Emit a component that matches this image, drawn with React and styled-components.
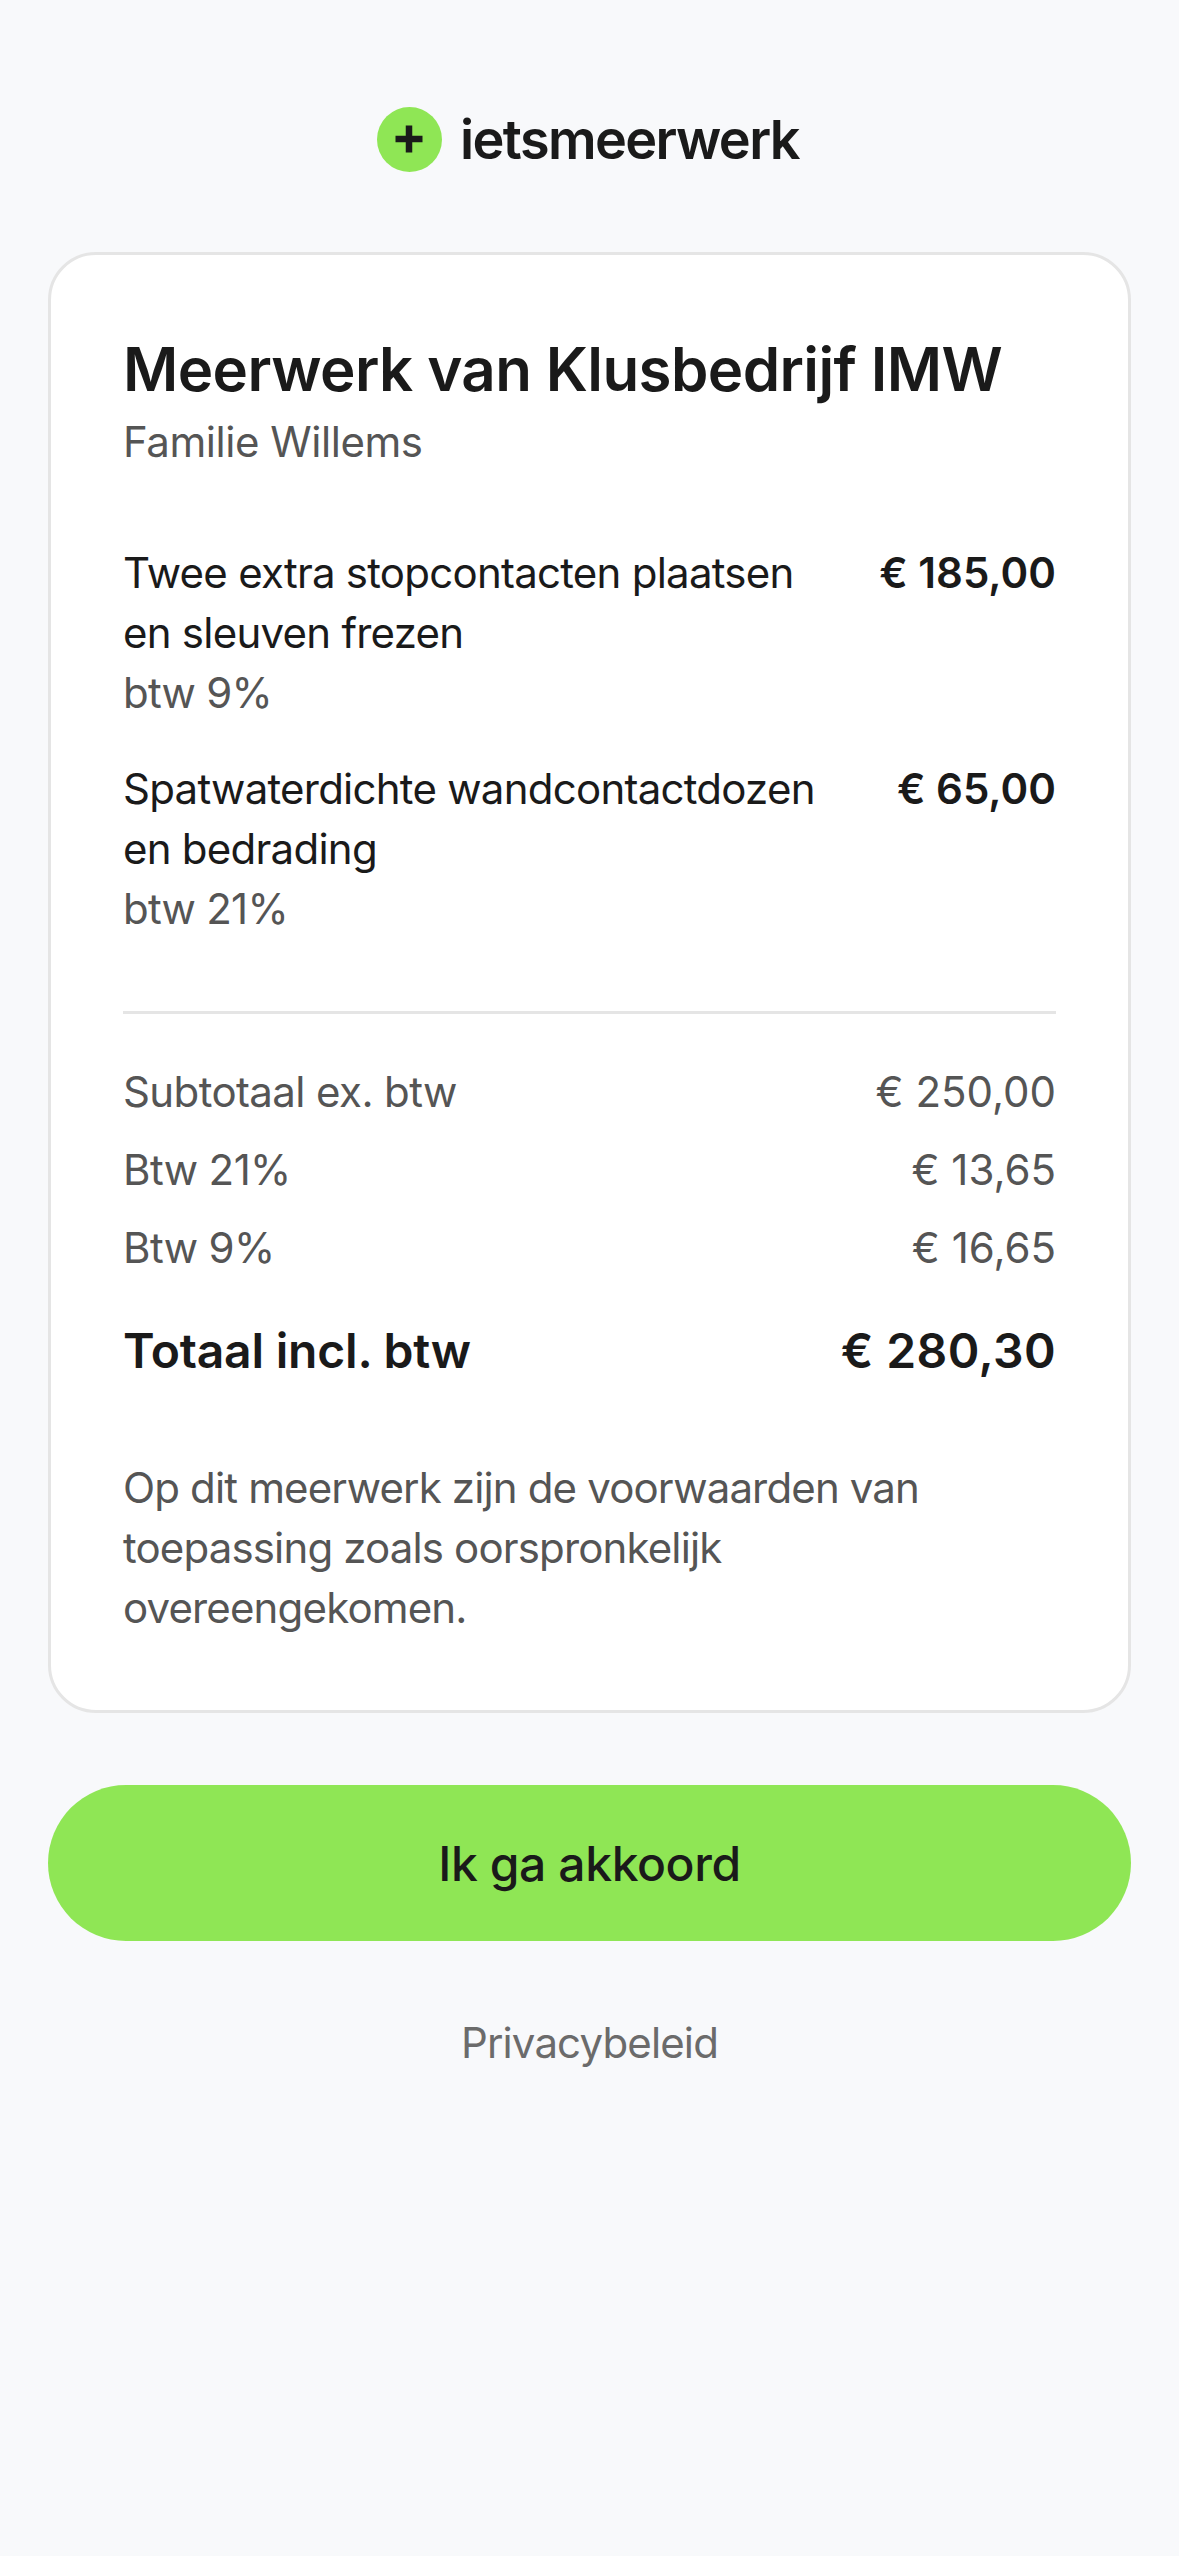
import React from 'react';
import styled, { createGlobalStyle } from 'styled-components';

const GlobalStyle = createGlobalStyle`
  html, body {
    margin: 0;
    padding: 0;
    background: #f8f9fb;
  }
  body {
    font-family: Inter, "Liberation Sans", sans-serif;
    color: #1a1a1a;
  }
`;

const Page = styled.main`
  min-height: 2556px;
  box-sizing: border-box;
  padding: 106px 48px 0;
  display: flex;
  flex-direction: column;
`;

const Brand = styled.header`
  display: flex;
  justify-content: center;
  align-items: center;
  gap: 18px;
  height: 66px;
  margin-bottom: 80px;
  padding-right: 3px;
`;

const BrandMark = styled.svg`
  width: 65px;
  height: 65px;
  display: block;
`;

const BrandName = styled.span`
  font-size: 54px;
  font-weight: 600;
  letter-spacing: -1.6px;
`;

const Card = styled.section`
  background: white;
  border: 3px solid #e5e5e5;
  border-radius: 48px;
  padding: 78px 72px 72px;
`;

const Title = styled.h1`
  margin: 0 0 7px;
  font-size: 60px;
  line-height: 72px;
  font-weight: 600;
  letter-spacing: -0.6px;
`;

const Customer = styled.p`
  margin: 0 0 71px;
  font-size: 42px;
  line-height: 60px;
  color: #555;
  letter-spacing: -0.45px;
`;

const Item = styled.div`
  display: flex;
  justify-content: space-between;
  gap: 48px;
  margin-bottom: 36px;
  font-size: 42px;
  line-height: 60px;
`;

const ItemName = styled.div`
  max-width: 720px;
  letter-spacing: -0.75px;
`;

const ItemVat = styled.div`
  color: #555;
`;

const ItemPrice = styled.div`
  font-weight: 600;
  white-space: nowrap;
`;

const Divider = styled.hr`
  border: 0;
  border-top: 3px solid #e5e5e5;
  margin: 72px 0 48px;
`;

const Row = styled.div`
  display: flex;
  justify-content: space-between;
  font-size: 42px;
  line-height: 60px;
  color: #555;
  margin-bottom: 18px;
`;

const RowLabel = styled.span`
  letter-spacing: -0.6px;
`;

const TotalRow = styled.div`
  display: flex;
  justify-content: space-between;
  font-size: 48px;
  line-height: 66px;
  font-weight: 600;
  margin: 40px 0 74px;
`;

const TotalLabel = styled.span`
  letter-spacing: -0.2px;
`;

const TotalValue = styled.span`
  letter-spacing: 0.4px;
`;

const Note = styled.p`
  margin: 0;
  font-size: 42px;
  line-height: 60px;
  color: #555;
  letter-spacing: -0.85px;
`;

const AgreeButton = styled.button`
  margin-top: 72px;
  height: 156px;
  border: 0;
  border-radius: 78px;
  background: #8fe655;
  color: #1a1a1a;
  font-family: inherit;
  font-size: 48px;
  font-weight: 500;
  letter-spacing: -0.4px;
`;

const PrivacyLink = styled.a`
  margin-top: 72px;
  text-align: center;
  font-size: 42px;
  line-height: 60px;
  color: #6b6b6b;
  letter-spacing: -0.85px;
`;

const items = [
  { name: 'Twee extra stopcontacten plaatsen en sleuven frezen', vat: 'btw 9%', price: '€ 185,00' },
  { name: 'Spatwaterdichte wandcontactdozen en bedrading', vat: 'btw 21%', price: '€ 65,00' },
];

const rows = [
  ['Subtotaal ex. btw', '€ 250,00'],
  ['Btw 21%', '€ 13,65'],
  ['Btw 9%', '€ 16,65'],
];

export default function App() {
  return (
    <>
      <GlobalStyle />
      <Page>
        <Brand>
          <BrandMark viewBox="0 0 65 65" aria-hidden="true">
            <circle cx="32.5" cy="32.5" r="32.5" fill="#8fe655" />
            <path d="M32 18.5v27M18.5 32h27" stroke="#1a1a1a" strokeWidth="6.5" fill="none" />
          </BrandMark>
          <BrandName>ietsmeerwerk</BrandName>
        </Brand>
        <Card>
          <Title>Meerwerk van Klusbedrijf IMW</Title>
          <Customer>Familie Willems</Customer>
          {items.map(item => (
            <Item key={item.name}>
              <ItemName>
                {item.name}
                <ItemVat>{item.vat}</ItemVat>
              </ItemName>
              <ItemPrice>{item.price}</ItemPrice>
            </Item>
          ))}
          <Divider />
          {rows.map(([label, value]) => (
            <Row key={label}>
              <RowLabel>{label}</RowLabel>
              <span>{value}</span>
            </Row>
          ))}
          <TotalRow>
            <TotalLabel>Totaal incl. btw</TotalLabel>
            <TotalValue>€ 280,30</TotalValue>
          </TotalRow>
          <Note>Op dit meerwerk zijn de voorwaarden van toepassing zoals oorspronkelijk overeengekomen.</Note>
        </Card>
        <AgreeButton>Ik ga akkoord</AgreeButton>
        <PrivacyLink>Privacybeleid</PrivacyLink>
      </Page>
    </>
  );
}
